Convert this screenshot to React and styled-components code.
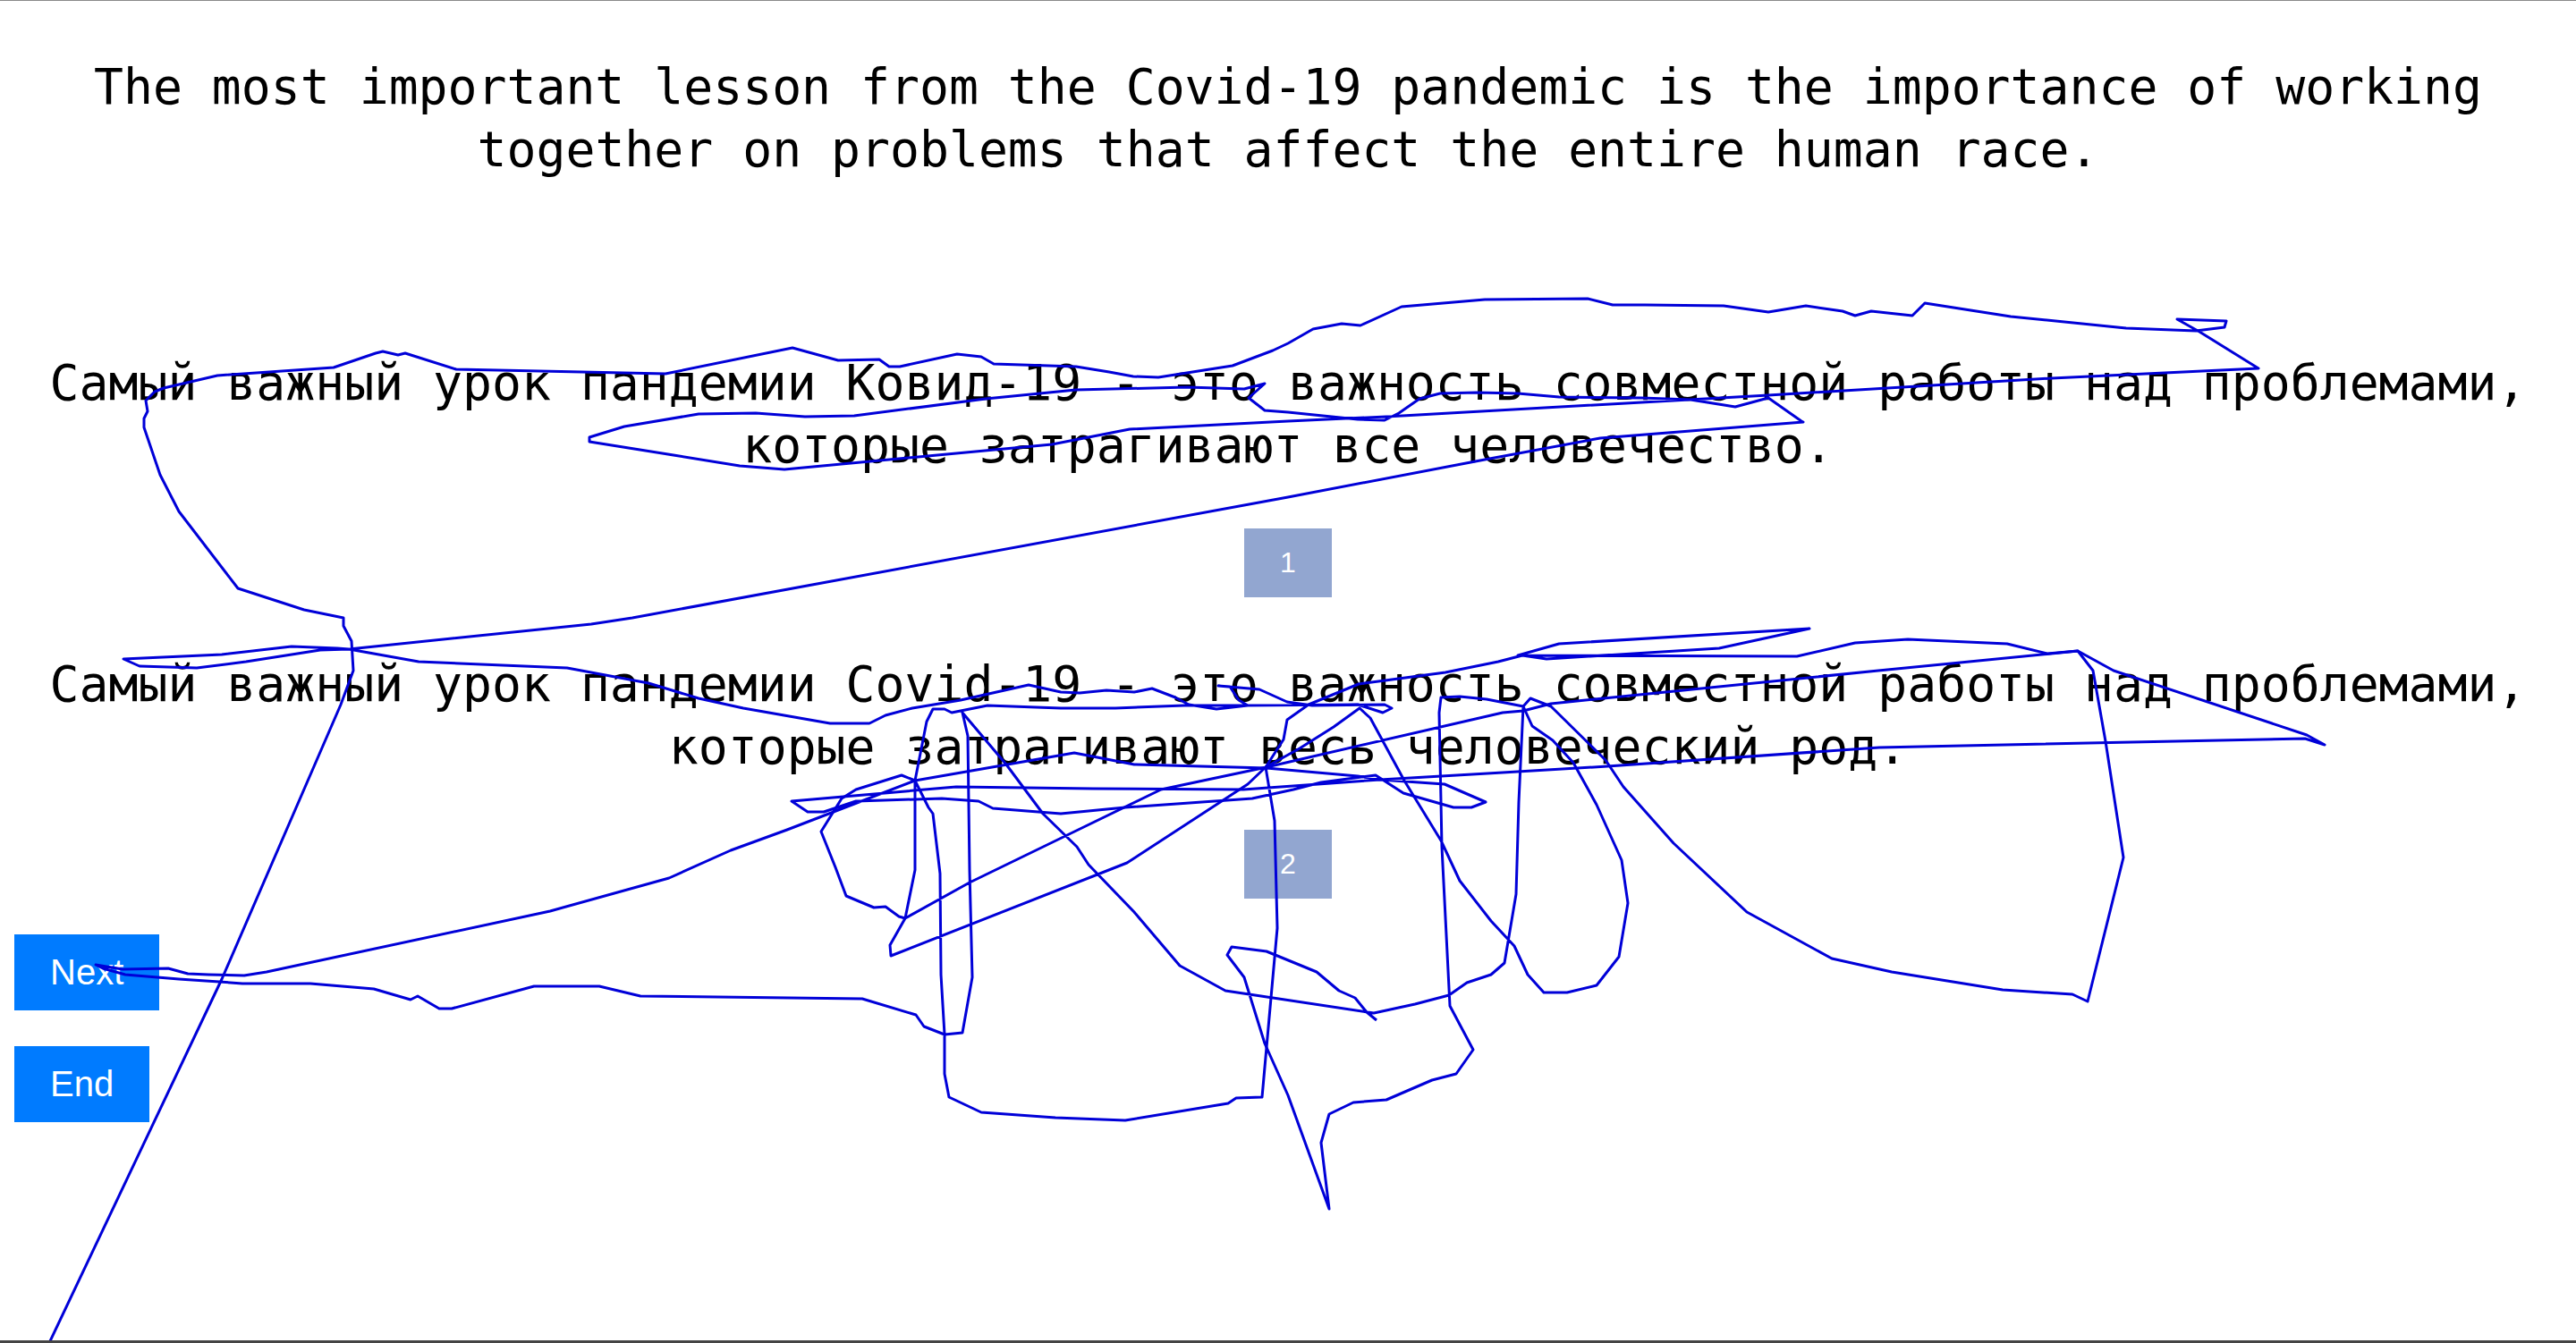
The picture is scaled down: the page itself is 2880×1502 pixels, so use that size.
import React from "react";
import styled, { createGlobalStyle } from "styled-components";

const GlobalStyle = createGlobalStyle`
  html, body {
    margin: 0;
    padding: 0;
    background: #fff;
    overflow: hidden;
  }
`;

// the pen stroke, one continuous line, in page pixels
const TRACE = `
55,1502 248,1095 381,788 395,750 393,717 384,700 384,691 340,682 266,658 200,572 179,531 161,478 161,468 165,460 163,448 173,438 183,434 243,420
373,411 420,395 428,393 445,397 453,395 510,413 744,418 886,389 937,403 983,402 994,410 1006,410 1070,396 1097,399 1111,407 1203,410 1240,416 1267,421 1295,422
1378,409 1423,392 1440,384 1468,368 1500,362 1521,364 1567,343 1660,335 1775,334 1803,341 1839,341 1927,342 1977,349 2019,342 2060,348 2074,353 2092,348 2138,353 2152,339
2248,354 2377,367 2455,370 2487,366 2489,359 2434,357 2459,371 2525,412 2294,423 1977,442 1550,466 1440,471 1263,480 1176,497 877,525 827,521 753,509 659,494 659,489
698,477 781,463 845,462 900,466 955,465 1102,446 1203,436 1327,433 1391,435 1414,429 1396,445 1414,459 1440,461 1518,469 1548,470 1564,462 1587,446 1610,440 1651,439
1697,440 1743,444 1835,445 1890,447 1940,455 1977,445 2014,471 2016,472 1789,490 1660,514 1440,556 707,691 661,698 390,726 377,725 326,723 248,732 138,737 156,745 220,747
275,740 358,727 390,726 468,740 634,747 725,764 781,781 831,792 928,809 972,809 990,800 1020,792 1074,783 1150,766 1186,774 1207,775 1237,772 1268,774 1288,770 1314,780
1329,788 1360,793 1395,789 1385,783 1375,768 1362,767 1408,771 1439,785 1467,789 1548,788 1556,792 1546,797 1518,788 1390,789 1324,789 1247,792 1186,792 1104,789 1064,797 1056,793 1043,793
1036,807 1023,873 1023,973 1012,1027 995,1057 996,1069 1260,965 1395,877 1415,858 1453,837 1491,813 1520,792 1532,803 1570,873 1611,940 1632,985 1667,1030 1693,1058 1708,1090
1726,1110 1752,1110 1785,1102 1810,1070 1820,1010 1813,962 1785,900 1759,853 1736,828 1713,812 1703,790 1711,781 1734,790 1795,850 1815,880 1871,943 1953,1020 2048,1072
2115,1087 2239,1107 2317,1112 2334,1120 2374,959 2354,829 2340,750 2323,728 2100,750 1734,787 1703,795 1680,797 1416,858 1298,883 1191,935 1084,987 1012,1027 1005,1025 990,1014 977,1015 946,1002
934,970 918,930 941,893 957,883 1008,867 1023,873 1038,903 1043,910 1051,977 1052,1090 1056,1157 1076,1155 1087,1093 1084,973 1082,823 1076,797 1125,855 1166,910 1204,947
1217,967 1268,1020 1319,1080 1370,1108 1536,1133 1582,1123 1620,1113 1640,1099 1667,1090 1682,1077 1695,1000 1698,897 1703,790 1662,782 1632,779 1611,780 1609,797 1612,947 1621,1125 1647,1174
1628,1201 1601,1208 1550,1230 1513,1233 1486,1246 1477,1278 1486,1352 1440,1225 1414,1167 1391,1093 1372,1068 1377,1059 1416,1064 1472,1087 1497,1108 1515,1116 1528,1132 1539,1141
`;

// second part, which meets the first at the next button and at the crossing above box 2
const TRACE_2 = `
1056,1157 1056,1201 1061,1227 1097,1244 1180,1250 1258,1253 1373,1234 1382,1228 1411,1227 1428,1038 1425,918 1415,858 1435,827 1439,805 1463,788 1519,765 1616,752 1675,740 1702,733 1729,737
1922,725 2023,703 1743,720 1697,733 2009,734 2074,719 2133,715 2244,720 2289,731 2323,728 2363,750 2579,822 2599,833 2577,826 2101,836 1797,857 1680,864 1543,872 1390,883 1222,882 1069,880
885,896 903,908 921,908 957,896 1053,893 1094,896 1110,904 1186,910 1258,903 1400,893 1446,883 1477,875 1538,867 1569,887 1625,903 1645,903 1661,897 1615,877 1543,872 1518,868 1416,859
1268,855 1201,842 1023,873 880,928 817,951 748,982 615,1019 298,1087 273,1091 233,1090 210,1089 188,1083 137,1084 107,1079 115,1083 140,1090 200,1095 245,1098 271,1100
347,1100 418,1106 459,1118 467,1114 491,1128 505,1128 597,1103 624,1103 670,1103 716,1114 964,1117 1024,1135 1033,1148 1056,1157
`;

const Page = styled.div`
  position: relative;
  box-sizing: border-box;
  height: 100vh;
  padding-top: 61px;
  border-top: 1px solid #8a8a8a;
  border-bottom: 3px solid #444;
  overflow: hidden;
`;

const Phrase = styled.p`
  margin: ${(props) => props.$top}px 0 0;
  font-family: "DejaVu Sans Mono", monospace;
  font-size: 54.75px;
  line-height: 70px;
  color: #000;
  text-align: center;
`;

const Pair = styled.section`
  display: flex;
  flex-direction: column;
  align-items: center;
`;

const Number = styled.div`
  margin-top: 58px;
  padding: 20px 40px;
  font-family: "Liberation Sans", Arial, sans-serif;
  font-size: 32px;
  color: #fff;
  background: #92a6d0;
`;

const Actions = styled.div`
  display: flex;
  flex-direction: column;
  align-items: flex-start;
  gap: 40px;
  margin: 40px 0 0 16px;
`;

const Action = styled.button`
  padding: 20px 40px;
  border: none;
  font-family: "Liberation Sans", Arial, sans-serif;
  font-size: 40px;
  line-height: 45px;
  color: #fff;
  background: #007bff;
`;

const Trace = styled.svg`
  position: absolute;
  top: -1px;
  left: 0;
  width: 2880px;
  height: 1502px;
  pointer-events: none;
`;

const Line = styled.polyline`
  fill: none;
  stroke: #0000d8;
  stroke-width: 3;
  stroke-linejoin: round;
`;

export default function App() {
  return (
    <Page>
      <GlobalStyle />
      <Phrase $top={0}>
        The most important lesson from the Covid-19 pandemic is the importance of working together on problems that affect the entire human race.
      </Phrase>
      <Pair>
        <Phrase $top={191}>
          Самый важный урок пандемии Ковид-19 - это важность совместной работы над проблемами, которые затрагивают все человечество.
        </Phrase>
        <Number>1</Number>
      </Pair>
      <Pair>
        <Phrase $top={62}>
          Самый важный урок пандемии Covid-19 - это важность совместной работы над проблемами, которые затрагивают весь человеческий род.
        </Phrase>
        <Number>2</Number>
      </Pair>
      <Actions>
        <Action>Next</Action>
        <Action>End</Action>
      </Actions>
      <Trace viewBox="0 0 2880 1502">
        <Line points={TRACE} />
        <Line points={TRACE_2} />
      </Trace>
    </Page>
  );
}
